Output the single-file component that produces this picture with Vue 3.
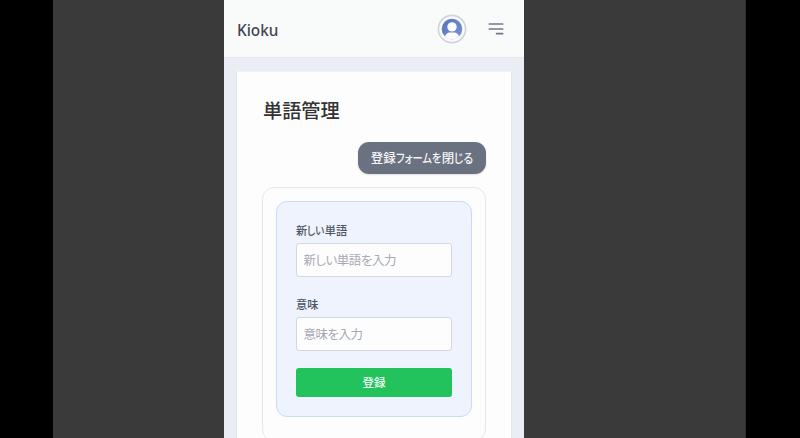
<script setup>
import { ref } from 'vue'

const word = ref('')
const meaning = ref('')
const formOpen = ref(true)
</script>

<template>
  <div class="stage">
    <div class="backdrop">
      <div class="phone">
        <header class="topbar">
          <span class="brand">Kioku</span>
          <svg class="avatar" viewBox="0 0 30 30" aria-hidden="true">
            <defs>
              <linearGradient id="face" x1="0" y1="0" x2="1" y2="1">
                <stop offset="0" stop-color="#5570bd" />
                <stop offset="1" stop-color="#7796d3" />
              </linearGradient>
              <clipPath id="disc"><circle cx="15" cy="15" r="10.3" /></clipPath>
            </defs>
            <circle cx="15" cy="15" r="13.600" fill="#fcfdfe" stroke="#d0d2de" stroke-width="1.600" />
            <circle cx="15" cy="15" r="10.300" fill="url(#face)" />
            <g clip-path="url(#disc)" fill="#fdfdff">
              <circle cx="15" cy="12.900" r="4.700" />
              <path d="M7.500 26c0-5 2.600-7.400 5.300-7.400h4.400c2.700 0 5.300 2.400 5.300 7.400z" />
            </g>
          </svg>
          <svg class="menu" viewBox="0 0 16 14" aria-hidden="true">
            <path d="M1.400 2h13.200M1.400 7h13.200M8.600 11.700h6" stroke="#77758a" stroke-width="1.700" stroke-linecap="round" />
          </svg>
        </header>
        <main class="card">
          <h1>単語管理</h1>
          <button class="toggle" type="button" @click="formOpen = !formOpen">登録<span class="kana kana-form">フォームを</span>閉<span class="kana kana-close">じる</span></button>
          <section class="panel">
            <form v-if="formOpen" class="form" @submit.prevent>
              <label for="word">新<span class="kana kana-new">しい</span>単語</label>
              <input id="word" v-model="word" placeholder="新しい単語を入力" />
              <label for="meaning">意味</label>
              <input id="meaning" v-model="meaning" placeholder="意味を入力" />
              <button class="submit" type="submit">登録</button>
            </form>
          </section>
        </main>
      </div>
    </div>
  </div>
</template>

<style>
body { margin: 0; background: #000; overflow: hidden; }
</style>

<style scoped>
* { box-sizing: border-box; }
.stage {
  height: 438px;
  padding: 0 54px 0 53px;
  background: #000;
  overflow: hidden;
  font-family: "Noto Sans", "Noto Sans CJK JP", sans-serif;
}
.backdrop {
  height: 438px;
  padding-left: 171px;
  background: #3a3a3a;
  border-right: 1px solid #303030;
}
.phone {
  width: 300.400px;
  height: 438px;
  background: #eaedf3;
  overflow: hidden;
}
.topbar {
  display: flex;
  align-items: center;
  height: 58px;
  padding: 0 20.400px 0 13px;
  background: #f9fbfb;
  border-bottom: 1px solid #e6e9ee;
}
.brand {
  flex: 1;
  color: #404350;
  font-size: 15.300px;
  font-weight: 500;
  line-height: 22px;
  padding-top: 3px;
}
.avatar { width: 30px; height: 30px; margin-right: 21px; }
.menu { width: 16px; height: 14px; fill: none; }
.card {
  display: flex;
  flex-direction: column;
  width: 276px;
  height: 500px;
  margin: 13px 0 0 12px;
  padding: 26px 26px 0;
  background: #fdfdfd;
  border: 1px solid #e5e7eb;
  border-top-color: #f1f3f6;
}
h1 {
  margin: 0 0 18px;
  height: 26px;
  font-size: 19.200px;
  font-weight: 500;
  line-height: 26px;
  color: #333;
}
button { border: 0; font-family: inherit; }
.kana {
  flex: none;
  white-space: nowrap;
  transform-origin: left center;
  font-feature-settings: "palt";
}
.kana-form { width: 46px; transform: scaleX(0.82); }
.kana-close { width: 19px; transform: scaleX(0.86); }
.kana-new { width: 17.500px; transform: scaleX(0.86); }
.toggle {
  display: flex;
  align-items: center;
  justify-content: center;
  align-self: flex-end;
  width: 128px;
  height: 32px;
  flex: none;
  margin-right: -1px;
  padding: 0 0 2px;
  border-radius: 11px;
  background: #6a7180;
  box-shadow: 0 1px 2px rgba(0, 0, 0, 0.12);
  color: #f4f5f7;
  font-size: 12.500px;
  font-weight: 500;
  white-space: nowrap;
}
.panel {
  width: 224px;
  height: 254px;
  flex: none;
  margin-top: 13px;
  margin-left: -1px;
  padding: 13px;
  border: 1px solid #e7e8eb;
  border-radius: 12px;
}
.form {
  display: flex;
  flex-direction: column;
  width: 196px;
  height: 216px;
  padding: 21px 19px 19px;
  background: #eef3fe;
  border: 1px solid #c8dcf6;
  border-radius: 11px;
}
label {
  display: flex;
  flex: none;
  height: 16px;
  margin-bottom: 4px;
  color: #4d5360;
  font-size: 11.200px;
  font-weight: 500;
  line-height: 16px;
}
input {
  flex: none;
  width: 156px;
  height: 34px;
  margin: 0 0 20px;
  padding: 1px 7px 0 6.500px;
  border: 1px solid #d3d7de;
  border-radius: 3px;
  background: #fdfdfe;
  font-family: inherit;
  font-size: 12.500px;
  letter-spacing: -0.500px;
  font-feature-settings: "palt";
  outline: 0;
}
input::placeholder { color: #a7a9b0; opacity: 1; }
.submit {
  width: 156px;
  height: 29px;
  margin-top: -3px;
  padding: 0 0 2px;
  flex: none;
  border-radius: 3px;
  background: #22c35c;
  color: #effcf2;
  font-size: 11.500px;
  font-weight: 500;
}
</style>
